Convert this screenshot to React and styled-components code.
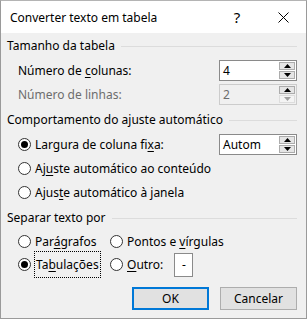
import React from 'react';
import styled, { createGlobalStyle } from 'styled-components';

const GlobalStyle = createGlobalStyle`
  html, body {
    margin: 0;
    padding: 0;
    background: #ffffff;
  }
  body {
    font-family: "Noto Sans", "Liberation Sans", sans-serif;
    font-size: 12px;
    color: #000;
  }
`;

const Window = styled.div`
  width: 307px;
  height: 319px;
  box-sizing: border-box;
  border: 1px solid #9a9a9a;
  border-top-color: #b4b4b4;
  display: flex;
  flex-direction: column;
  background: #f0f0f0;
`;

const TitleBar = styled.div`
  height: 32px;
  background: #ffffff;
  display: flex;
  align-items: center;
  padding-left: 9px;
  font-size: 12px;
`;

const Title = styled.div`
  flex: 1;
`;

const TitleButton = styled.div`
  width: 46px;
  height: 32px;
  display: flex;
  align-items: center;
  justify-content: center;
  font-size: ${(p) => p.size || 14}px;
`;

const Body = styled.div`
  flex: 1;
  padding: 1px 9px 0 6px;
  display: flex;
  flex-direction: column;
`;

const GroupHeader = styled.div`
  height: 22px;
  margin-top: ${(p) => p.top || 0}px;
  display: flex;
  align-items: center;
  gap: 6px;
  white-space: nowrap;
  &::after {
    content: '';
    flex: 1;
    height: 1px;
    background: #dcdcdc;
    margin-top: 2px;
  }
`;

const GroupBody = styled.div`
  padding-left: 11px;
  margin-top: 2px;
`;

const Row = styled.div`
  height: ${(p) => p.h || 24}px;
  display: flex;
  align-items: center;
  justify-content: space-between;
  color: ${(p) => (p.disabled ? '#6d6d6d' : '#000')};
`;

const Grid = styled.div`
  display: grid;
  grid-template-columns: 92px auto;
  grid-auto-rows: 23px;
  align-items: center;
`;

const Cell = styled.div`
  display: flex;
  align-items: center;
`;

const RadioLabel = styled.label`
  display: flex;
  align-items: center;
  gap: 4px;
  white-space: nowrap;
`;

const RadioCircle = styled.span`
  width: 13px;
  height: 13px;
  box-sizing: border-box;
  border-radius: 50%;
  border: 1px solid #333;
  background: #fff;
  display: flex;
  align-items: center;
  justify-content: center;
  &::after {
    content: '';
    width: 7px;
    height: 7px;
    border-radius: 50%;
    background: ${(p) => (p.checked ? '#000' : 'transparent')};
  }
`;

const Focus = styled.span`
  outline: 1px dotted #000;
  outline-offset: 0;
  padding: 4px 1px;
`;

const Key = styled.span`
  text-decoration: underline;
  text-underline-offset: 2px;
`;

const Spin = styled.div`
  width: 78px;
  height: 21px;
  box-sizing: border-box;
  border: 1px solid ${(p) => (p.disabled ? '#cccccc' : '#8a8a8a')};
  background: ${(p) => (p.disabled ? '#f0f0f0' : '#fff')};
  display: flex;
  color: ${(p) => (p.disabled ? '#6d6d6d' : '#000')};
`;

const SpinValue = styled.div`
  flex: 1;
  display: flex;
  align-items: center;
  padding-left: 3px;
`;

const SpinButtons = styled.div`
  width: 16px;
  display: flex;
  flex-direction: column;
  gap: 1px;
  padding: 1px 1px 1px 0;
`;

const SpinButton = styled.div`
  flex: 1;
  box-sizing: border-box;
  background: ${(p) => (p.disabled ? '#f4f4f4' : '#e5e5e5')};
  border: 1px solid ${(p) => (p.disabled ? '#dddddd' : '#acacac')};
  display: flex;
  align-items: center;
  justify-content: center;
`;

const Arrow = ({ up, color }) => (
  <svg width="7" height="4" viewBox="0 0 7 4">
    <path d={up ? 'M0 4 L3.5 0 L7 4 Z' : 'M0 0 L3.5 4 L7 0 Z'} fill={color} />
  </svg>
);

const SpinBox = ({ value, disabled, downDisabled }) => (
  <Spin disabled={disabled}>
    <SpinValue>{value}</SpinValue>
    <SpinButtons>
      <SpinButton>
        <Arrow up color="#000" />
      </SpinButton>
      <SpinButton disabled={downDisabled}>
        <Arrow color={downDisabled ? '#a0a0a0' : '#000'} />
      </SpinButton>
    </SpinButtons>
  </Spin>
);

const SmallInput = styled.div`
  width: 19px;
  height: 24px;
  box-sizing: border-box;
  border: 1px solid #8a8a8a;
  background: #fff;
  display: flex;
  align-items: center;
  justify-content: center;
  margin-left: 11px;
`;

const Footer = styled.div`
  display: flex;
  justify-content: flex-end;
  gap: 11px;
  margin-top: 11px;
`;

const Button = styled.div`
  width: 77px;
  height: 23px;
  box-sizing: border-box;
  background: #e1e1e1;
  border: ${(p) => (p.primary ? '2px solid #0078d7' : '1px solid #adadad')};
  display: flex;
  align-items: center;
  justify-content: center;
`;

const Radio = ({ checked, children }) => (
  <RadioLabel>
    <RadioCircle checked={checked} />
    {children}
  </RadioLabel>
);

export default function App() {
  return (
    <>
      <GlobalStyle />
      <Window>
        <TitleBar>
          <Title>Converter texto em tabela</Title>
          <TitleButton size={15}>?</TitleButton>
          <TitleButton>
            <svg width="11" height="11" viewBox="0 0 11 11">
              <path d="M0.5 0.5 L10.5 10.5 M10.5 0.5 L0.5 10.5" stroke="#000" strokeWidth="1" />
            </svg>
          </TitleButton>
        </TitleBar>
        <Body>
          <GroupHeader>Tamanho da tabela</GroupHeader>
          <GroupBody>
            <Row>
              <span>
                Número de <Key>c</Key>olunas:
              </span>
              <SpinBox value="4" />
            </Row>
            <Row disabled>
              <span>Número de linhas:</span>
              <SpinBox value="2" disabled downDisabled />
            </Row>
          </GroupBody>

          <GroupHeader top={2}>Comportamento do ajuste automático</GroupHeader>
          <GroupBody>
            <Row>
              <Radio checked>
                <span>
                  Largura de coluna fi<Key>x</Key>a:
                </span>
              </Radio>
              <SpinBox value="Autom" />
            </Row>
            <Row>
              <Radio>
                <span>
                  Aj<Key>u</Key>ste automático ao conteúdo
                </span>
              </Radio>
            </Row>
            <Row>
              <Radio>
                <span>
                  Ajus<Key>t</Key>e automático à janela
                </span>
              </Radio>
            </Row>
          </GroupBody>

          <GroupHeader top={2}>Separar texto por</GroupHeader>
          <GroupBody>
            <Grid>
              <Cell>
                <Radio>
                  <span>
                    Par<Key>á</Key>grafos
                  </span>
                </Radio>
              </Cell>
              <Cell>
                <Radio>
                  <span>
                    Pontos e <Key>v</Key>írgulas
                  </span>
                </Radio>
              </Cell>
              <Cell>
                <Radio checked>
                  <Focus>
                    Ta<Key>b</Key>ulações
                  </Focus>
                </Radio>
              </Cell>
              <Cell>
                <Radio>
                  <span>
                    <Key>O</Key>utro:
                  </span>
                </Radio>
                <SmallInput>-</SmallInput>
              </Cell>
            </Grid>
          </GroupBody>

          <Footer>
            <Button primary>OK</Button>
            <Button>Cancelar</Button>
          </Footer>
        </Body>
      </Window>
    </>
  );
}
